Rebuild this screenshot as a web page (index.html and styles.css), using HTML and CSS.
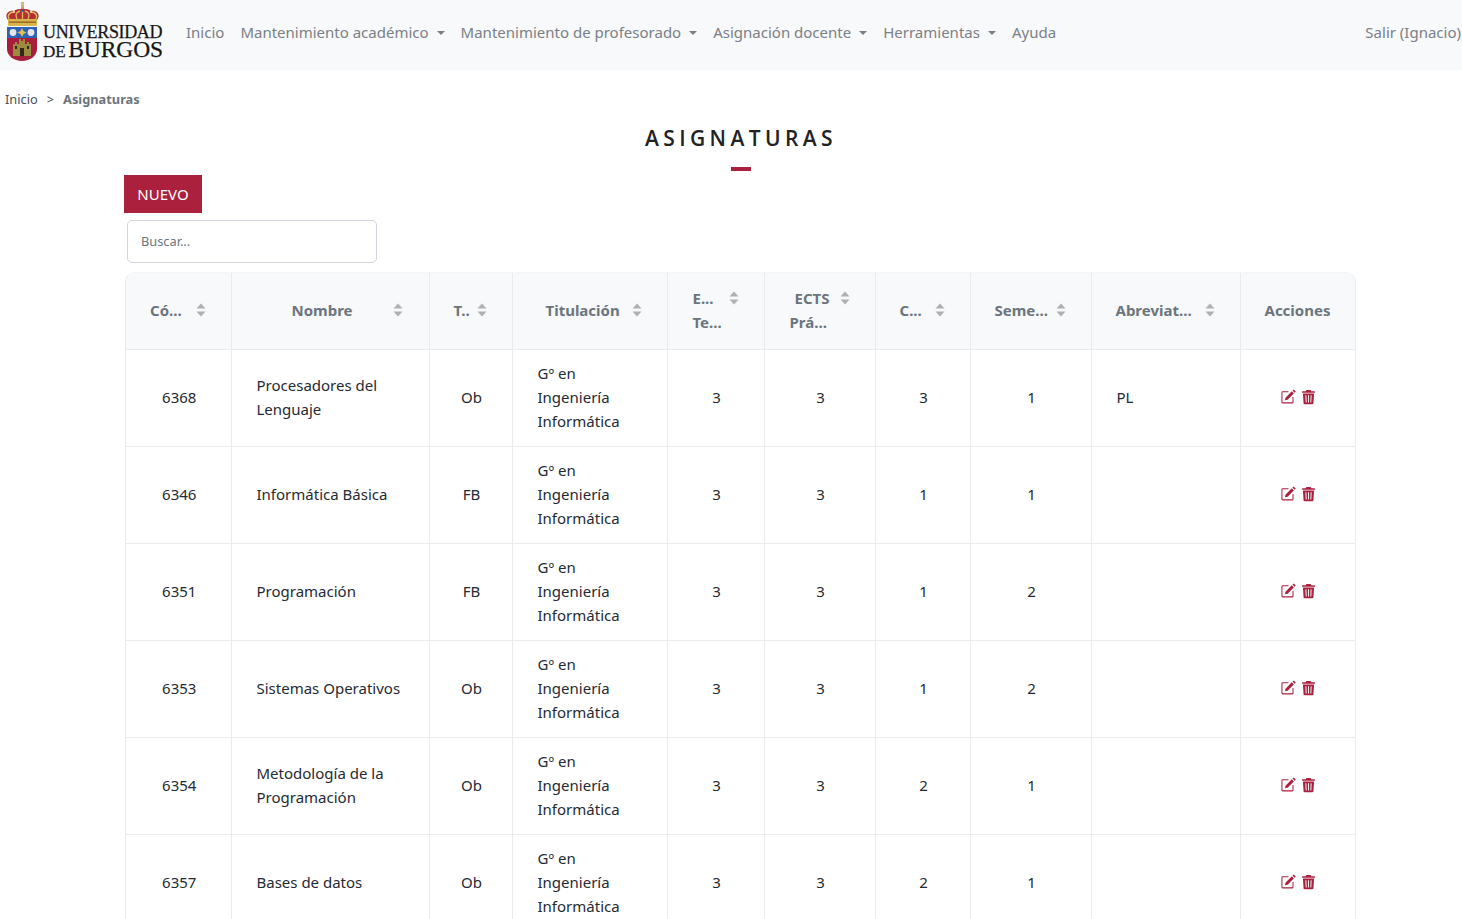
FILE: index.html
```html
<!DOCTYPE html>
<html lang="es">

<head>
    <meta charset="utf-8">
    <title>Asignaturas</title>
    <link rel="stylesheet" href="styles.css">
</head>

<body>
    <svg class="sprites" width="0" height="0">
        <symbol id="sort" viewBox="0 0 10 14">
            <path d="M5 0.500 9.500 5.500H0.500Z"/>
            <path d="M0.500 8.500H9.500L5 13.500Z"/>
        </symbol>
        <symbol id="edit" viewBox="0 0 16 16">
            <path fill="none" stroke="currentColor" stroke-width="1.100" d="M12.800 8.500V14c0 .5-.3.8-.8.8H1.800c-.5 0-.8-.3-.8-.8V3.800c0-.5.3-.8.8-.8H8"/>
            <path d="M13.600.4 15.800 2.600 14.500 3.900 12.300 1.700ZM11.500 2.500 13.700 4.700 7 11.400 4.200 12 4.800 9.200Z"/>
        </symbol>
        <symbol id="trash" viewBox="0 0 14 16">
            <path d="M4.800.4h4.400l.8 1.500h3.300c.4 0 .7.300.7.700v.7H0v-.7c0-.4.3-.7.7-.7H4Z"/>
            <path fill-rule="evenodd" d="M1 4.300h12l-.7 10.400c0 .6-.5 1-1.100 1H2.800c-.6 0-1.100-.4-1.100-1ZM3.700 6l.3 8h1l-.3-8ZM6.500 6v8h1V6ZM9.300 6l-.3 8h1l.3-8Z"/>
        </symbol>
    </svg>

    <nav class="navbar">
        <a class="brand" href="#">
            <svg class="crest" width="35" height="62" viewBox="0 0 35 62">
                <!-- crown -->
                <rect x="16" y="1" width="3" height="9" fill="#c8ad72"/>
                <circle cx="17.500" cy="3" r="1.800" fill="#d3bd88"/>
                <path d="M3 19C-1 14 3 9 9 10 12 7 23 7 26 10 32 9 36 14 32 19Z" fill="#b82e35"/>
                <path d="M4 18C2 14 5 11 9 11M31 18C33 14 30 11 26 11M12 18C10 14 11 11 15 10M23 18C25 14 24 11 20 10M17.500 18V10" fill="none" stroke="#d8bc62" stroke-width="1.300"/>
                <circle cx="9" cy="11" r="1.100" fill="#e8dca8"/>
                <circle cx="26" cy="11" r="1.100" fill="#e8dca8"/>
                <circle cx="17.500" cy="9.500" r="1.200" fill="#2a5aa0"/>
                <rect x="3" y="18" width="29" height="7" rx="1" fill="#d9b64a"/>
                <rect x="4" y="20.500" width="27" height="1.300" fill="#8f5a2a"/>
                <!-- shield -->
                <path d="M2 26H32V48C32 55 25 60 17 60 9 60 2 55 2 48Z" fill="#a51f3a"/>
                <rect x="2" y="26" width="30" height="11" fill="#2f62b4"/>
                <circle cx="8" cy="31.500" r="3.400" fill="#e4e4e8"/>
                <circle cx="26" cy="31.500" r="3.400" fill="#e4e4e8"/>
                <path d="M17 27l1.500 3 3 1.500-3 1.500-1.500 3-1.500-3-3-1.500 3-1.500Z" fill="#e0c04e"/>
                <!-- castle -->
                <path d="M8 55V43h2v-2h2v2h2v-5h2v2h2v-2h2v5h2v-2h2v2h2v12Z" fill="#9c8a40"/>
                <rect x="15" y="47" width="4" height="8" fill="#33261a"/>
                <rect x="10" y="45" width="2" height="3" fill="#33261a"/>
                <rect x="22" y="45" width="2" height="3" fill="#33261a"/>
            </svg>
            <span class="brand-text">
                <span class="brand-top">UNIVERSIDAD</span>
                <span class="brand-bottom"><small>DE</small> BURGOS</span>
            </span>
        </a>
        <ul class="nav-links">
            <li><a href="#">Inicio</a></li>
            <li><a class="caret" href="#">Mantenimiento académico</a></li>
            <li><a class="caret" href="#">Mantenimiento de profesorado</a></li>
            <li><a class="caret" href="#">Asignación docente</a></li>
            <li><a class="caret" href="#">Herramientas</a></li>
            <li><a href="#">Ayuda</a></li>
        </ul>
        <a class="logout" href="#">Salir (Ignacio)</a>
    </nav>

    <div class="crumbs">
        <a href="#">Inicio</a>
        <span class="sep">&gt;</span>
        <strong>Asignaturas</strong>
    </div>

    <main>
        <h1>ASIGNATURAS</h1>
        <div class="title-bar"></div>

        <div class="content">
            <a class="btn-new" href="#">NUEVO</a>
            <input class="search" type="text" placeholder="Buscar...">

            <div class="table-wrap">
                <table>
                    <thead>
                        <tr>
                            <th class="c1"><span class="th">Có...<svg class="sort"><use href="#sort"/></svg></span></th>
                            <th class="c2"><span class="th">Nombre<svg class="sort"><use href="#sort"/></svg></span></th>
                            <th class="c3"><span class="th">T..<svg class="sort"><use href="#sort"/></svg></span></th>
                            <th class="c4"><span class="th">Titulación<svg class="sort"><use href="#sort"/></svg></span></th>
                            <th class="c5"><span class="th">E...<svg class="sort"><use href="#sort"/></svg></span><br>Te...</th>
                            <th class="c6"><span class="th ects">ECTS<svg class="sort"><use href="#sort"/></svg></span><br>Prá...</th>
                            <th class="c7"><span class="th">C...<svg class="sort"><use href="#sort"/></svg></span></th>
                            <th class="c8"><span class="th">Seme...<svg class="sort"><use href="#sort"/></svg></span></th>
                            <th class="c9"><span class="th">Abreviat...<svg class="sort"><use href="#sort"/></svg></span></th>
                            <th class="c10">Acciones</th>
                        </tr>
                    </thead>
                    <tbody>
                        <tr>
                            <td>6368</td><td class="left">Procesadores del Lenguaje</td><td>Ob</td>
                            <td class="left">Gº en Ingeniería Informática</td><td>3</td><td>3</td><td>3</td><td>1</td><td class="left">PL</td>
                            <td><span class="actions"><svg class="edit"><use href="#edit"/></svg><svg class="trash"><use href="#trash"/></svg></span></td>
                        </tr>
                        <tr>
                            <td>6346</td><td class="left">Informática Básica</td><td>FB</td>
                            <td class="left">Gº en Ingeniería Informática</td><td>3</td><td>3</td><td>1</td><td>1</td><td class="left"></td>
                            <td><span class="actions"><svg class="edit"><use href="#edit"/></svg><svg class="trash"><use href="#trash"/></svg></span></td>
                        </tr>
                        <tr>
                            <td>6351</td><td class="left">Programación</td><td>FB</td>
                            <td class="left">Gº en Ingeniería Informática</td><td>3</td><td>3</td><td>1</td><td>2</td><td class="left"></td>
                            <td><span class="actions"><svg class="edit"><use href="#edit"/></svg><svg class="trash"><use href="#trash"/></svg></span></td>
                        </tr>
                        <tr>
                            <td>6353</td><td class="left">Sistemas Operativos</td><td>Ob</td>
                            <td class="left">Gº en Ingeniería Informática</td><td>3</td><td>3</td><td>1</td><td>2</td><td class="left"></td>
                            <td><span class="actions"><svg class="edit"><use href="#edit"/></svg><svg class="trash"><use href="#trash"/></svg></span></td>
                        </tr>
                        <tr>
                            <td>6354</td><td class="left">Metodología de la Programación</td><td>Ob</td>
                            <td class="left">Gº en Ingeniería Informática</td><td>3</td><td>3</td><td>2</td><td>1</td><td class="left"></td>
                            <td><span class="actions"><svg class="edit"><use href="#edit"/></svg><svg class="trash"><use href="#trash"/></svg></span></td>
                        </tr>
                        <tr>
                            <td>6357</td><td class="left">Bases de datos</td><td>Ob</td>
                            <td class="left">Gº en Ingeniería Informática</td><td>3</td><td>3</td><td>2</td><td>1</td><td class="left"></td>
                            <td><span class="actions"><svg class="edit"><use href="#edit"/></svg><svg class="trash"><use href="#trash"/></svg></span></td>
                        </tr>
                    </tbody>
                </table>
            </div>
        </div>
    </main>
</body>
</html>
```

FILE: styles.css
```css
html,
body {
    margin: 0;
    height: 919px;
    overflow: hidden;
}

body {
    font-family: "Noto Sans", "Open Sans", sans-serif;
    font-size: 15px;
    line-height: 24px;
    color: #1f2a33;
    background: #fff;
}

a {
    color: inherit;
    text-decoration: none;
}

.sprites {
    position: absolute;
}

/* navbar */
.navbar {
    display: flex;
    align-items: center;
    box-sizing: border-box;
    height: 70px;
    background: #f8f9fa;
    padding: 0 1px 6px 5px;
}

.brand {
    display: flex;
    align-items: center;
    margin-right: 15px;
}

.crest {
    display: block;
}

.brand-text {
    display: flex;
    flex-direction: column;
    width: 120px;
    margin-left: 3px;
    margin-top: 20px;
    font-family: "Liberation Serif", serif;
    color: #161616;
    -webkit-text-stroke: 0.25px #161616;
    white-space: nowrap;
}

.brand-top {
    font-size: 18px;
    line-height: 16px;
    letter-spacing: -0.35px;
}

.brand-bottom {
    font-size: 23.500px;
    line-height: 18px;
    letter-spacing: -0.1px;
    word-spacing: -3px;
}

.brand-bottom small {
    font-size: 17px;
}

.nav-links {
    display: flex;
    list-style: none;
    margin: 0;
    padding: 0;
    flex: 1;
    color: #7b8087;
}

.nav-links a {
    display: block;
    padding: 0 8px;
}

.caret::after {
    content: "";
    display: inline-block;
    margin-left: 8px;
    vertical-align: 3px;
    border-top: 4.500px solid;
    border-left: 4.500px solid transparent;
    border-right: 4.500px solid transparent;
}

.logout {
    color: #7b8087;
}

/* breadcrumb */
.crumbs {
    display: flex;
    gap: 9px;
    padding: 17px 5px 0;
    height: 24px;
    font-size: 12.800px;
    color: #4a5057;
}

.crumbs strong {
    color: #6c757d;
}

/* title */
h1 {
    margin: 12px 0 0;
    padding-left: 20px;
    text-align: center;
    font-family: "Open Sans", sans-serif;
    font-size: 21px;
    font-weight: 600;
    letter-spacing: 4.400px;
    line-height: 30px;
    color: #222;
}

.title-bar {
    width: 20px;
    height: 4px;
    margin: 14px auto 0;
    position: relative;
    left: 10px;
    background: #ab213d;
}

.content {
    padding: 4px 106px 0 124px;
}

.btn-new {
    display: block;
    width: 78px;
    height: 38px;
    line-height: 38px;
    text-align: center;
    color: #fff;
    background: #ab213d;
}

.search {
    display: block;
    box-sizing: border-box;
    width: 250px;
    height: 43px;
    margin: 7px 0 10px 3px;
    padding: 0 13px 2px;
    border: 1px solid #d1d3dd;
    border-radius: 5px;
    font-family: inherit;
    font-size: 12.800px;
}

.search::placeholder {
    color: #6c757d;
    opacity: 1;
}

/* table */
.table-wrap {
    margin: -1px 0 0 1px;
    width: 1231px;
    border: 1px solid #e9ecef;
    border-top-color: #f4f5f7;
    border-radius: 10px 10px 0 0;
    overflow: hidden;
    box-sizing: border-box;
}

table {
    width: 100%;
    border-collapse: collapse;
    table-layout: fixed;
}

th,
td {
    border: 1px solid #e9ecef;
    padding: 11px 23px 13px 25px;
    text-align: center;
}

th:first-child,
td:first-child {
    border-left: 0;
}

th:last-child,
td:last-child {
    border-right: 0;
    padding-left: 24px;
    padding-right: 24px;
}

thead th {
    box-sizing: border-box;
    border-top: 0;
    height: 76px;
    padding-right: 6px;
    text-align: left;
    background: #f8f9fa;
    color: #6c757d;
    font-weight: 700;
}

td {
    height: 72px;
}

td.left {
    text-align: left;
}

thead .c1 { width: 105px; padding-left: 24px; }
thead .c2 { width: 198px; padding-left: 60px; }
thead .c3 { width: 83px; padding-left: 24px; }
thead .c4 { width: 155px; padding-left: 33px; }
thead .c5 { width: 97px; padding-left: 25px; }
thead .c6 { width: 111px; padding-left: 25px; }
thead .c7 { width: 95px; padding-left: 24px; }
thead .c8 { width: 121px; padding-left: 24px; }
thead .c9 { width: 149px; padding-left: 24px; }
thead .c10 { width: 115px; padding-left: 24px; }

.th {
    display: inline-flex;
    align-items: center;
    gap: 12px;
}

.c1 .th { gap: 14px; }
.c2 .th { gap: 40px; }
.c3 .th { gap: 7px; }
.c5 .th { gap: 15px; }
.c6 .th { gap: 11px; margin-left: 5px; }
.c7 .th { gap: 13px; }
.c8 .th { gap: 8px; }
.c9 .th { gap: 13px; }

.sort {
    width: 10px;
    height: 14px;
    fill: #adb0b4;
    flex: none;
}

.actions {
    display: inline-flex;
    align-items: center;
    gap: 6px;
    margin-bottom: 3px;
    vertical-align: middle;
    color: #ab213d;
    fill: #ab213d;
}

.edit {
    width: 15px;
    height: 15px;
}

.trash {
    width: 13px;
    height: 16px;
}
```
